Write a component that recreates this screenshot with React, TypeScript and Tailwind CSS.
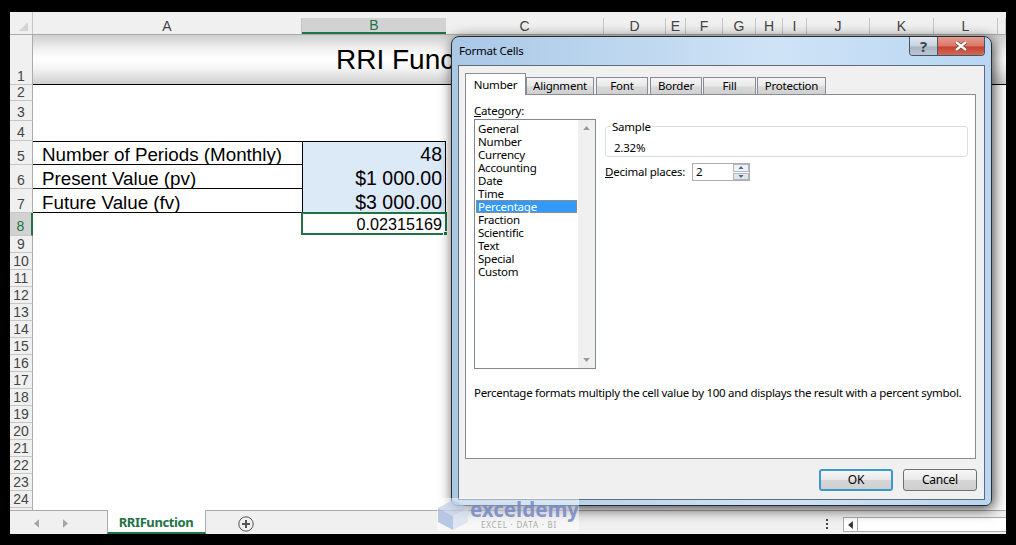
const cols = [
  { name: 'A', w: 'w-[269px]' },
  { name: 'B', w: 'w-[144px]', active: true },
  { name: 'C', w: 'w-[158px]' },
  { name: 'D', w: 'w-[62px]' },
  { name: 'E', w: 'w-[20px]' },
  { name: 'F', w: 'w-[37px]' },
  { name: 'G', w: 'w-[33px]' },
  { name: 'H', w: 'w-[27px]' },
  { name: 'I', w: 'w-[24px]' },
  { name: 'J', w: 'w-[63px]' },
  { name: 'K', w: 'w-[64px]' },
  { name: 'L', w: 'w-[64px]' },
  { name: '', w: 'w-[8px]' },
];

const categories = ['General', 'Number', 'Currency', 'Accounting', 'Date', 'Time', 'Percentage', 'Fraction', 'Scientific', 'Text', 'Special', 'Custom'];

const tabs = [
  { name: 'Alignment', w: 'w-[68px]', mr: 'mr-[2px]' },
  { name: 'Font', w: 'w-[52px]', mr: 'mr-[2px]' },
  { name: 'Border', w: 'w-[52px]', mr: 'mr-[1px]' },
  { name: 'Fill', w: 'w-[53px]', mr: 'mr-[1px]' },
  { name: 'Protection', w: 'w-[69px]', mr: '' },
];

function RowHead({ n, active, h }: { n: number; active?: boolean; h: string }) {
  return (
    <div className={`${h} w-[23px] shrink-0 flex items-end justify-center border-b border-[#c6c6c6] text-[14px] leading-[16px] ${active ? 'bg-[#d2d2d2] border-r-2 border-r-[#217346] text-[#217346] pb-px' : 'bg-[#f0f0f0] border-r border-r-[#ababab] text-[#444]'}`}>
      {n}
    </div>
  );
}

function Triangle({ dir, className }: { dir: 'up' | 'down' | 'left' | 'right'; className: string }) {
  const pts = { up: '0,6 10,6 5,0', down: '0,0 10,0 5,6', left: '6,0 6,10 0,5', right: '0,0 0,10 6,5' }[dir];
  const box = dir === 'up' || dir === 'down' ? '0 0 10 6' : '0 0 6 10';
  return (
    <svg viewBox={box} className={className}>
      <polygon points={pts} fill="currentColor" />
    </svg>
  );
}

function Sheet() {
  return (
    <div className="flex flex-col flex-1 overflow-hidden font-['Liberation_Sans',sans-serif] text-black">
      <div className="flex h-[23px] shrink-0 bg-[#f0f0f0] border-b border-[#ababab]">
        <div className="w-[23px] shrink-0 flex items-end justify-end pr-[4px] pb-[3px] border-r border-[#c6c6c6]">
          <svg viewBox="0 0 9 9" className="w-[9px] h-[9px]"><polygon points="9,0 9,9 0,9" fill="#d4d4d4" /></svg>
        </div>
        {cols.map((c) => (
          <div
            key={c.name}
            className={`${c.w} shrink-0 mt-[6px] flex items-center justify-center text-[14px] ${c.active ? 'bg-[#d2d2d2] border-b-2 border-[#217346] text-[#217346]' : 'border-r border-[#c6c6c6] text-[#444]'}`}
          >
            {c.name}
          </div>
        ))}
      </div>

      <div className="flex h-[50px] shrink-0">
        <RowHead n={1} h="h-[50px]" />
        <div className="flex-1 border-b border-black pl-[303px] pt-[7px] text-[28px] leading-[36px] bg-[linear-gradient(180deg,#cfcfcf_0%,#f2f2f2_30%,#ffffff_50%,#f2f2f2_70%,#cfcfcf_100%)]">
          RRI Function
        </div>
      </div>
      <RowHead n={2} h="h-[16px]" />
      <RowHead n={3} h="h-[20px]" />
      <RowHead n={4} h="h-[20px]" />

      <div className="flex h-[24px] shrink-0">
        <RowHead n={5} h="h-[24px]" />
        <div className="w-[269px] border-t border-b border-black pl-[9px] text-[18.8px] leading-[25px]">Number of Periods (Monthly)</div>
        <div className="w-[144px] border-t border-l border-r border-black bg-[#dce9f7] pr-[3px] text-right text-[19.5px] leading-[25px]">48</div>
      </div>
      <div className="flex h-[24px] shrink-0">
        <RowHead n={6} h="h-[24px]" />
        <div className="w-[269px] border-b border-black pl-[9px] text-[18.8px] leading-[27px]">Present Value (pv)</div>
        <div className="w-[144px] border-l border-r border-black bg-[#dce9f7] pr-[3px] text-right text-[19.5px] leading-[27px]">$1 000.00</div>
      </div>
      <div className="flex h-[24px] shrink-0">
        <RowHead n={7} h="h-[24px]" />
        <div className="w-[269px] border-b border-black pl-[9px] text-[18.8px] leading-[27px]">Future Value (fv)</div>
        <div className="w-[144px] border-l border-r border-black bg-[#dce9f7] pr-[3px] text-right text-[19.5px] leading-[27px]">$3 000.00</div>
      </div>
      <div className="flex h-[23px] shrink-0">
        <RowHead n={8} active h="h-[23px]" />
        <div className="w-[268px] shrink-0" />
        <div className="relative w-[146px] -mt-px h-[23px] border-2 border-[#217346] pr-[3px] text-right text-[16.2px] leading-[21px]">
          0.02315169
          <div className="absolute -right-[3px] -bottom-[3px] w-[5px] h-[5px] bg-[#217346] border border-white" />
        </div>
      </div>

      {Array.from({ length: 16 }, (_, i) => (
        <RowHead key={i} n={i + 9} h="h-[17px]" />
      ))}
      <div className="flex-1 w-[23px] bg-[#f0f0f0] border-r border-[#ababab]" />

      <div className="flex items-stretch h-[24px] shrink-0 bg-[#f0f0f0] border-t border-[#ababab]">
        <div className="w-[97px] shrink-0 flex items-center pt-px pl-[24px] gap-[24px] text-[#a6a6a6]">
          <Triangle dir="left" className="w-[5px] h-[9px]" />
          <Triangle dir="right" className="w-[5px] h-[9px]" />
        </div>
        <div className="w-[99px] shrink-0 -mt-px pt-[3px] pr-px bg-white border-l border-r border-[#ababab] border-b-2 border-b-[#217346] flex items-center justify-center text-[13px] tracking-[-0.4px] font-bold text-[#217346] font-['Noto_Sans',sans-serif]">
          RRIFunction
        </div>
        <div className="ml-[32px] pt-[2px] flex items-center">
          <svg viewBox="0 0 16 16" className="w-[16px] h-[16px] text-[#555]">
            <circle cx="8" cy="8" r="7.2" fill="none" stroke="currentColor" strokeWidth="1" />
            <path d="M8 4v8M4 8h8" stroke="currentColor" strokeWidth="2" />
          </svg>
        </div>
        <div className="ml-[572px] pt-[2px] flex flex-col justify-center gap-[2px]">
          <div className="w-[2px] h-[2px] bg-[#444]" />
          <div className="w-[2px] h-[2px] bg-[#444]" />
          <div className="w-[2px] h-[2px] bg-[#444]" />
        </div>
        <div className="ml-[15px] mt-[6px] mb-[2px] flex-1 flex bg-white border border-[#ababab] border-r-0">
          <div className="w-[14px] flex items-center justify-center border-r border-[#ababab] text-[#333]">
            <Triangle dir="left" className="w-[5px] h-[8px]" />
          </div>
        </div>
      </div>
    </div>
  );
}

function Button({ label, primary }: { label: string; primary?: boolean }) {
  return (
    <div className={`w-[74px] h-[22px] rounded-[3px] flex items-center justify-center text-[12px] bg-[linear-gradient(180deg,#f6f6f6_0%,#e8e8e8_48%,#d6d6d6_52%,#cfcfcf_100%)] ${primary ? 'border-2 border-[#3a9ad0]' : 'border border-[#707070]'}`}>
      {label}
    </div>
  );
}

function Dialog() {
  return (
    <div className="absolute left-[441px] top-[24px] w-[541px] h-[470px] rounded-t-[8px] rounded-b-[6px] border border-[#2c2c2c] px-[6px] pb-[5px] flex flex-col bg-[linear-gradient(90deg,#a9c8e6_0%,#bcd6ee_30%,#cfe3f6_60%,#b8d6f2_100%)] shadow-[2px_3px_14px_rgba(0,0,0,0.75)] font-['Noto_Sans',sans-serif] text-[11.5px] tracking-[-0.23px] text-black">
      <div className="h-[28px] shrink-0 flex justify-between">
        <div className="pl-[1px] pt-[6px] leading-[16px]">Format Cells</div>
        <div className="flex h-[19px] border border-t-0 border-[#4a5563] rounded-b-[4px] overflow-hidden">
          <div className="w-[28px] flex items-center justify-center border-r border-[#4a5563] bg-[linear-gradient(180deg,#dfe8f1_0%,#c8d3de_50%,#a9b6c4_55%,#b9c5d2_100%)] text-[#3c4650] font-bold text-[15px] leading-none">?</div>
          <div className="w-[46px] flex items-center justify-center bg-[linear-gradient(180deg,#e49d90_0%,#d9786a_50%,#c8412e_55%,#d06a58_100%)]">
            <svg viewBox="0 0 14 10" className="w-[14px] h-[10px]">
              <path d="M2 1l10 8M12 1L2 9" stroke="#5a3a35" strokeWidth="3.6" />
              <path d="M2 1l10 8M12 1L2 9" stroke="#fff" strokeWidth="2.4" />
            </svg>
          </div>
        </div>
      </div>

      <div className="flex-1 flex flex-col border border-[#5f6b77] bg-[#f0f0f0] px-[6px] pt-[7px]">
        <div className="flex h-[22px] shrink-0 items-end -mb-px relative">
          <div className="w-[61px] h-[22px] flex items-center justify-center bg-white border border-b-0 border-[#898c95] relative z-10">Number</div>
          {tabs.map((t) => (
            <div key={t.name} className={`${t.w} ${t.mr} h-[18px] flex items-center justify-center border border-[#898c95] bg-[linear-gradient(180deg,#f4f4f4_0%,#e9e9e9_50%,#d9d9d9_55%,#d0d0d0_100%)]`}>
              {t.name}
            </div>
          ))}
        </div>

        <div className="w-[511px] h-[365px] shrink-0 bg-white border border-[#898c95] pl-[8px] pt-[8px]">
          <div className="h-[16px] leading-[16px]"><u>C</u>ategory:</div>
          <div className="flex gap-[9px]">
            <div className="w-[122px] h-[250px] flex border border-[#828790]">
              <div className="flex-1 pt-[2px] px-px leading-[13px]">
                {categories.map((c) => (
                  <div key={c} className={`h-[13px] ${c === 'Percentage' ? 'bg-[#3399ff] text-white border border-dotted border-[#d9822b] pl-px leading-[11px]' : 'pl-[2px]'}`}>{c}</div>
                ))}
              </div>
              <div className="w-[17px] flex flex-col justify-between items-center py-[6px] bg-[#f0f0f0] text-[#9a9a9a]">
                <Triangle dir="up" className="w-[7px] h-[4px]" />
                <Triangle dir="down" className="w-[7px] h-[4px]" />
              </div>
            </div>
            <div className="w-[363px]">
              <fieldset className="mt-px h-[37px] rounded-[3px] border border-[#d5dfe5] pl-[5px]">
                <legend className="px-[1px] leading-[13px]">Sample</legend>
                <div className="mt-[8px] ml-[3px] leading-[13px]">2.32%</div>
              </fieldset>
              <div className="mt-[6px] flex items-center h-[18px]">
                <div className="w-[87px]"><u>D</u>ecimal places:</div>
                <div className="w-[58px] h-[18px] flex items-center justify-between border border-[#abadb3] bg-white pl-[3px]">
                  2
                  <div className="w-[16px] h-[16px] flex flex-col gap-px">
                    <div className="flex-1 flex items-center justify-center border border-[#b5b5b5] bg-[#eef1f5] text-[#3b6ea5]"><Triangle dir="up" className="w-[6px] h-[3px]" /></div>
                    <div className="flex-1 flex items-center justify-center border border-[#b5b5b5] bg-[#e2e6eb] text-[#3b6ea5]"><Triangle dir="down" className="w-[6px] h-[3px]" /></div>
                  </div>
                </div>
              </div>
            </div>
          </div>
          <div className="mt-[17px] leading-[14px] whitespace-nowrap tracking-[-0.29px]">Percentage formats multiply the cell value by 100 and displays the result with a percent symbol.</div>
        </div>

        <div className="flex justify-end gap-[10px] mt-[10px] mr-px">
          <Button label="OK" primary />
          <Button label="Cancel" />
        </div>
      </div>
    </div>
  );
}

function Watermark() {
  return (
    <div className="absolute left-[427px] top-[486px] w-[142px] h-[33px] bg-white/45 flex items-center font-['Noto_Sans',sans-serif]">
      <svg viewBox="0 0 32 32" className="w-[32px] h-[32px] shrink-0 opacity-60">
        <polygon points="16,1 31,9 16,17 1,9" fill="#b7c8e6" />
        <polygon points="1,9 16,17 16,31 1,23" fill="#8ea9d8" />
        <polygon points="31,9 16,17 16,31 31,23" fill="#cfdbef" />
      </svg>
      <div className="ml-px">
        <div className="text-[20.5px] font-bold leading-[19px] text-[#7288c8]/85">exceldemy</div>
        <div className="pl-[11px] text-[8px] leading-[11px] tracking-[0.8px] text-[#a9a9a9]">EXCEL · DATA · BI</div>
      </div>
    </div>
  );
}

export default function App() {
  return (
    <div className="w-[1016px] h-[545px] bg-black pt-[12px] pl-[10px] overflow-hidden">
      <div className="relative w-[996px] h-[522px] bg-white flex flex-col overflow-hidden">
        <Sheet />
        <Dialog />
        <Watermark />
      </div>
    </div>
  );
}
